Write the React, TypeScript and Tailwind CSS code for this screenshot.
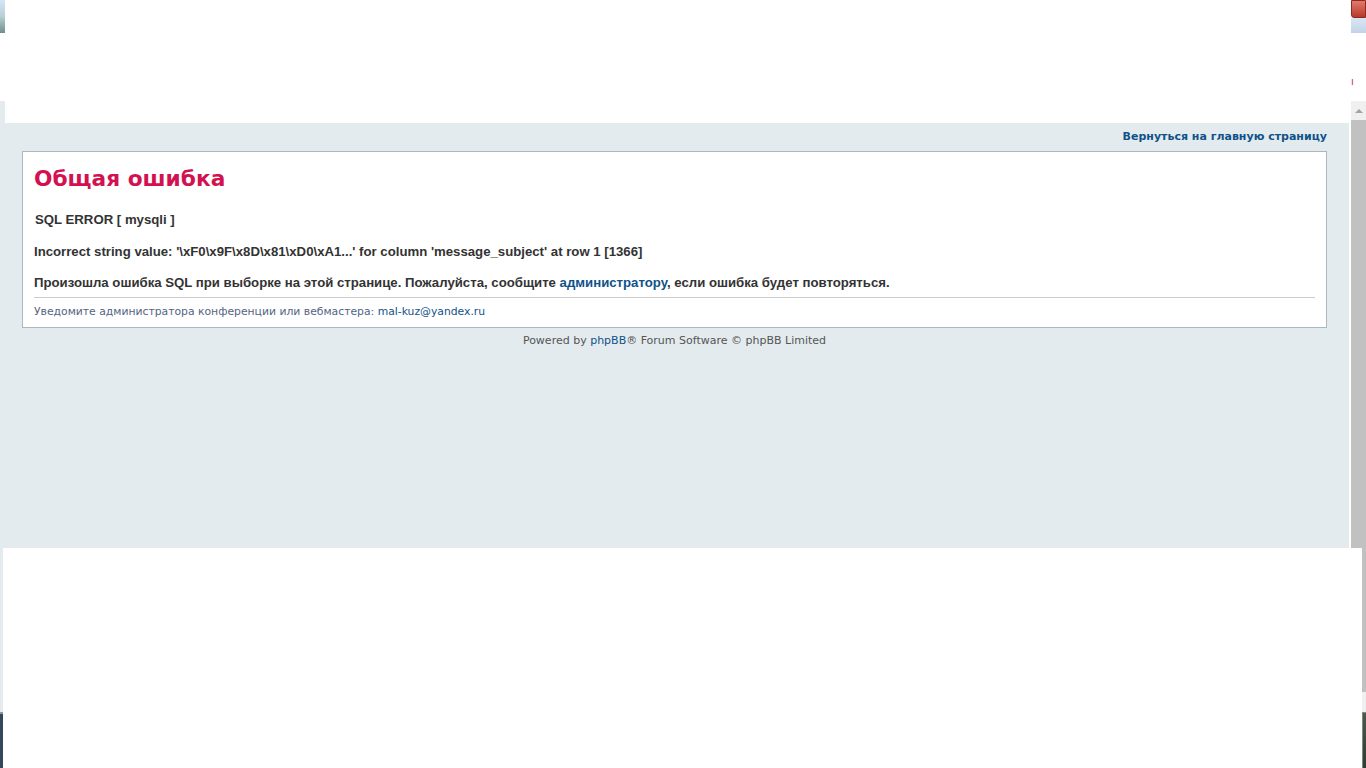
import React from "react";

const verdana = { fontFamily: '"DejaVu Sans", Verdana, sans-serif' };
const arial = { fontFamily: '"Liberation Sans", Arial, sans-serif' };

function TopRow() {
  return (
    <div className="flex h-[101px] bg-white">
      <div className="w-[5px] flex flex-col">
        <div className="h-[33px] bg-gradient-to-b from-[#d6e6fa] via-[#b9cfd6] to-[#6f8f8a]" />
      </div>
      <div className="flex-1" />
      <div className="w-[15px] flex flex-col">
        <div className="h-[18px] rounded-bl-[3px] border border-[#8a2a20] bg-gradient-to-b from-[#e07a6a] to-[#b8372a]" />
        <div className="h-[15px] bg-gradient-to-b from-[#dbe6f3] to-[#c2d3e8]" />
        <div className="flex-1 pt-[44px] text-[10px] leading-none text-[#c0306a]" style={verdana}>
          ı
        </div>
      </div>
    </div>
  );
}

function ErrorPanel() {
  return (
    <div className="border border-[#a9b8c2] bg-white px-[11px] pt-[14px] pb-[8px]">
      <h2 className="text-[21.7px] font-bold leading-[26px] text-[#d31150]" style={verdana}>
        Общая ошибка
      </h2>
      <div className="mt-[19px] text-[13.2px] font-bold text-[#333]" style={arial}>
        <p className="pl-px leading-[18px]">SQL ERROR [ mysqli ]</p>
        <p className="mt-[14px] leading-[18px]">
          Incorrect string value: '\xF0\x9F\x8D\x81\xD0\xA1...' for column 'message_subject' at row 1 [1366]
        </p>
        <p className="mt-[13px] leading-[18px]">
          Произошла ошибка SQL при выборке на этой странице. Пожалуйста, сообщите{" "}
          <a href="#" className="text-[#105289]">администратору</a>, если ошибка будет повторяться.
        </p>
      </div>
      <div className="mt-[5px] border-t border-[#cccccc] pt-[7px] text-[10.8px] leading-[14px] text-[#536482]" style={verdana}>
        Уведомите администратора конференции или вебмастера:{" "}
        <a href="#" className="text-[#105289]">mal-kuz@yandex.ru</a>
      </div>
    </div>
  );
}

function MiddleRow() {
  return (
    <div className="flex h-[447px]">
      <div className="w-[5px] bg-[#e4ebee]" />
      <div className="flex flex-1 flex-col bg-[#e4ebee]">
        <div className="h-[22px] bg-white" />
        <div className="pl-[17px] pr-[22px]">
          <div className="flex justify-end pt-[7px] pb-[7px]">
            <a href="#" className="text-[11px] font-bold leading-[14px] text-[#105289]" style={verdana}>
              Вернуться на главную страницу
            </a>
          </div>
          <ErrorPanel />
          <div className="pt-[6px] text-center text-[11px] leading-[14px] text-[#555555]" style={verdana}>
            Powered by <a href="#" className="text-[#105289]">phpBB</a>® Forum Software © phpBB Limited
          </div>
        </div>
      </div>
      <div className="ml-[2px] flex w-[15px] flex-col bg-[#f0f0f0]">
        <div className="flex h-[19px] items-center justify-center">
          <div className="h-0 w-0 border-x-[4px] border-b-[4px] border-x-transparent border-b-[#a3a3a3]" />
        </div>
        <div className="flex-1 bg-[#c1c1c1]" />
      </div>
    </div>
  );
}

function LowerRows() {
  return (
    <>
      <div className="flex h-[164px]">
        <div className="w-[3px] bg-[#e4ebee]" />
        <div className="flex-1 bg-white" />
        <div className="flex w-[4px] flex-col bg-[#f0f0f0]">
          <div className="h-[144px] bg-[#c1c1c1]" />
        </div>
      </div>
      <div className="flex h-[56px]">
        <div className="w-[3px] border-t-2 border-[#8a97a4] bg-[#34485c]" />
        <div className="flex-1 bg-white" />
        <div className="w-[4px] border-t border-l border-[#7a8a80] bg-gradient-to-b from-[#4a5a4c] to-[#2f3c30]" />
      </div>
    </>
  );
}

export default function App() {
  return (
    <div className="h-[768px] w-[1366px] overflow-hidden bg-white">
      <TopRow />
      <MiddleRow />
      <LowerRows />
    </div>
  );
}
